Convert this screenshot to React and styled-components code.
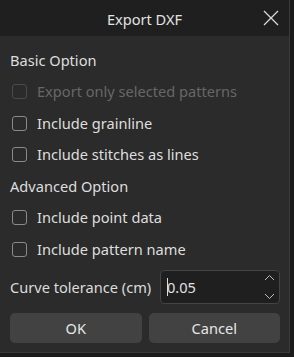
import React, { useState } from 'react'
import styled, { createGlobalStyle } from 'styled-components'

const Global = createGlobalStyle`
  html, body {
    margin: 0;
    padding: 0;
    background: #1b1b1b;
  }
  body {
    font-family: "Noto Sans", "Open Sans", sans-serif;
  }
`

const Dialog = styled.div`
  width: 289px;
  height: 352px;
  background: #2b2b2b;
  border-right: 1px solid #3a3a3a;
  border-bottom: 1px solid #3a3a3a;
  display: flex;
  flex-direction: column;
  color: #dcdcdc;
  font-size: 14.6px;
`

const TitleBar = styled.div`
  height: 36px;
  background: #1f1f1f;
  display: flex;
  align-items: center;
  justify-content: center;
  position: relative;
  flex-shrink: 0;
`

const Title = styled.span`
  color: #e2e2e2;
  margin-top: 2px;
`

const Close = styled.button`
  position: absolute;
  right: 8px;
  top: 8px;
  width: 20px;
  height: 20px;
  padding: 0;
  border: none;
  background: none;
  display: flex;
  align-items: center;
  justify-content: center;
`

const Body = styled.div`
  display: flex;
  flex-direction: column;
  padding: 8px 9px 0 10px;
`

const Section = styled.div`
  height: 31.5px;
  display: flex;
  align-items: center;
  color: #dedede;
`

const Row = styled.label`
  display: flex;
  align-items: center;
  gap: 10px;
  height: 31.5px;
  padding-left: 2px;
  color: ${p => (p.disabled ? '#676767' : '#dedede')};
`

const Box = styled.span`
  width: 13px;
  height: 13px;
  border: 1px solid ${p => (p.disabled ? '#4a4a4a' : '#8a8a8a')};
  border-radius: 3px;
  flex-shrink: 0;
  margin-top: 1px;
`

const FieldRow = styled.div`
  display: flex;
  align-items: center;
  justify-content: space-between;
  margin-top: 5px;
`

const Spin = styled.div`
  width: 120px;
  height: 34px;
  box-sizing: border-box;
  background: #1f1f1f;
  border: 1px solid #444;
  border-radius: 4px;
  display: flex;
  align-items: center;
  padding-left: 6px;
  position: relative;
`

const Caret = styled.span`
  width: 1px;
  height: 18px;
  background: #dcdcdc;
  margin-right: -1px;
`

const SpinText = styled.span`
  color: #e0e0e0;
`

const Arrows = styled.div`
  position: absolute;
  right: 4px;
  top: 3px;
  bottom: 3px;
  display: flex;
  flex-direction: column;
  justify-content: space-between;
`

const Buttons = styled.div`
  display: grid;
  grid-template-columns: 1fr 1fr;
  gap: 7px;
  margin-top: 9px;
`

const Btn = styled.button`
  height: 30px;
  border: none;
  border-radius: 5px;
  background: #424242;
  color: #e6e6e6;
  font-family: inherit;
  font-size: 14.6px;
`

const options = [
  { label: 'Basic Option' },
  { text: 'Export only selected patterns', disabled: true },
  { text: 'Include grainline' },
  { text: 'Include stitches as lines' },
  { label: 'Advanced Option' },
  { text: 'Include point data' },
  { text: 'Include pattern name' },
]

export default function App() {
  const [value] = useState('0.05')
  return (
    <>
      <Global />
      <Dialog>
        <TitleBar>
          <Title>Export DXF</Title>
          <Close aria-label="close">
            <svg width="16" height="16" viewBox="0 0 16 16">
              <path d="M1 1L15 15M15 1L1 15" stroke="#d8d8d8" strokeWidth="1.3" />
            </svg>
          </Close>
        </TitleBar>
        <Body>
          {options.map((o, i) =>
            o.label ? (
              <Section key={i}>{o.label}</Section>
            ) : (
              <Row key={i} disabled={o.disabled}>
                <Box disabled={o.disabled} />
                {o.text}
              </Row>
            )
          )}
          <FieldRow>
            <span>Curve tolerance (cm)</span>
            <Spin>
              <Caret />
              <SpinText>{value}</SpinText>
              <Arrows>
                <svg width="11" height="7" viewBox="0 0 11 7">
                  <path d="M1 6L5.5 1.5L10 6" stroke="#bdbdbd" strokeWidth="1" fill="none" />
                </svg>
                <svg width="11" height="7" viewBox="0 0 11 7">
                  <path d="M1 1L5.5 5.5L10 1" stroke="#bdbdbd" strokeWidth="1" fill="none" />
                </svg>
              </Arrows>
            </Spin>
          </FieldRow>
          <Buttons>
            <Btn>OK</Btn>
            <Btn>Cancel</Btn>
          </Buttons>
        </Body>
      </Dialog>
    </>
  )
}
